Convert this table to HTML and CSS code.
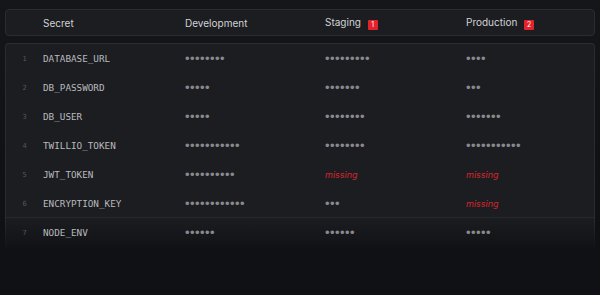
FILE: index.html
```html
<!DOCTYPE html>
<html>
<head>
<meta charset="utf-8">
<link rel="stylesheet" href="styles.css">
</head>
<body>
<div class="page">
  <div class="head card">
    <div class="cell"></div>
    <div class="cell">Secret</div>
    <div class="cell">Development</div>
    <div class="cell">Staging <span class="badge">1</span></div>
    <div class="cell">Production <span class="badge">2</span></div>
  </div>
  <div class="body card">
    <div class="row">
      <div class="num">1</div><div class="key">DATABASE_URL</div>
      <div class="dots">••••••••</div><div class="dots">•••••••••</div><div class="dots">••••</div>
    </div>
    <div class="row">
      <div class="num">2</div><div class="key">DB_PASSWORD</div>
      <div class="dots">•••••</div><div class="dots">•••••••</div><div class="dots">•••</div>
    </div>
    <div class="row">
      <div class="num">3</div><div class="key">DB_USER</div>
      <div class="dots">•••••</div><div class="dots">••••••••</div><div class="dots">•••••••</div>
    </div>
    <div class="row">
      <div class="num">4</div><div class="key">TWILLIO_TOKEN</div>
      <div class="dots">•••••••••••</div><div class="dots">••••••••</div><div class="dots">•••••••••••</div>
    </div>
    <div class="row">
      <div class="num">5</div><div class="key">JWT_TOKEN</div>
      <div class="dots">••••••••••</div><div class="missing">missing</div><div class="missing">missing</div>
    </div>
    <div class="row">
      <div class="num">6</div><div class="key">ENCRYPTION_KEY</div>
      <div class="dots">••••••••••••</div><div class="dots">•••</div><div class="missing">missing</div>
    </div>
    <div class="row last">
      <div class="num">7</div><div class="key">NODE_ENV</div>
      <div class="dots">••••••</div><div class="dots">••••••</div><div class="dots">•••••</div>
    </div>
  </div>
</div>
</body>
</html>
```
FILE: styles.css
```css
html, body {
  margin: 0;
  padding: 0;
  background: #0f1114;
  height: 100%;
  overflow: hidden;
}
body {
  font-family: Inter, "Liberation Sans", sans-serif;
  color: #d4d4d6;
}
.page {
  padding: 9px 5px 0 5px;
  display: flex;
  flex-direction: column;
  gap: 7px;
  background: linear-gradient(#14161a, #0f1114 60%);
  height: 100%;
  box-sizing: border-box;
}
.card {
  border: 1px solid #2a2c30;
  border-radius: 4px;
  background: #1c1d21;
}
.head {
  height: 27px;
  box-sizing: border-box;
  display: grid;
  grid-template-columns: 37px 142px 140px 141px 1fr;
  align-items: center;
  font-size: 10px;
  color: #d2d2d4;
}
.badge {
  display: inline-block;
  width: 10px;
  height: 10px;
  background: #e3232b;
  color: #fff;
  font-size: 7px;
  line-height: 10px;
  text-align: center;
  border-radius: 1px;
  margin-left: 4px;
  vertical-align: -1px;
}
.body {
  height: 206px;
  border-bottom: none;
  border-radius: 4px 4px 0 0;
  position: relative;
}
.body::after {
  content: "";
  position: absolute;
  left: -1px; right: -1px; bottom: -1px;
  height: 34px;
  background: linear-gradient(rgba(15,17,20,0), rgba(15,17,20,1));
  z-index: 0;
}
.row {
  position: relative;
  z-index: 1;
  display: grid;
  grid-template-columns: 37px 142px 140px 141px 1fr;
  align-items: center;
  height: 29px;
}
.row.last {
  border-top: 1px solid #26282c;
  margin-top: -1px;
}
.num {
  text-align: center;
  font-size: 7px;
  color: #55575c;
  font-family: "DejaVu Sans Mono", monospace;
}
.key {
  font-family: "DejaVu Sans Mono", monospace;
  font-size: 9.3px;
  color: #b9babd;
}
.dots {
  font-family: "Liberation Sans", sans-serif;
  font-size: 13px;
  letter-spacing: 0.45px;
  color: #88898e;
}
.missing {
  font-style: italic;
  font-size: 9px;
  color: #d3262d;
}
```
